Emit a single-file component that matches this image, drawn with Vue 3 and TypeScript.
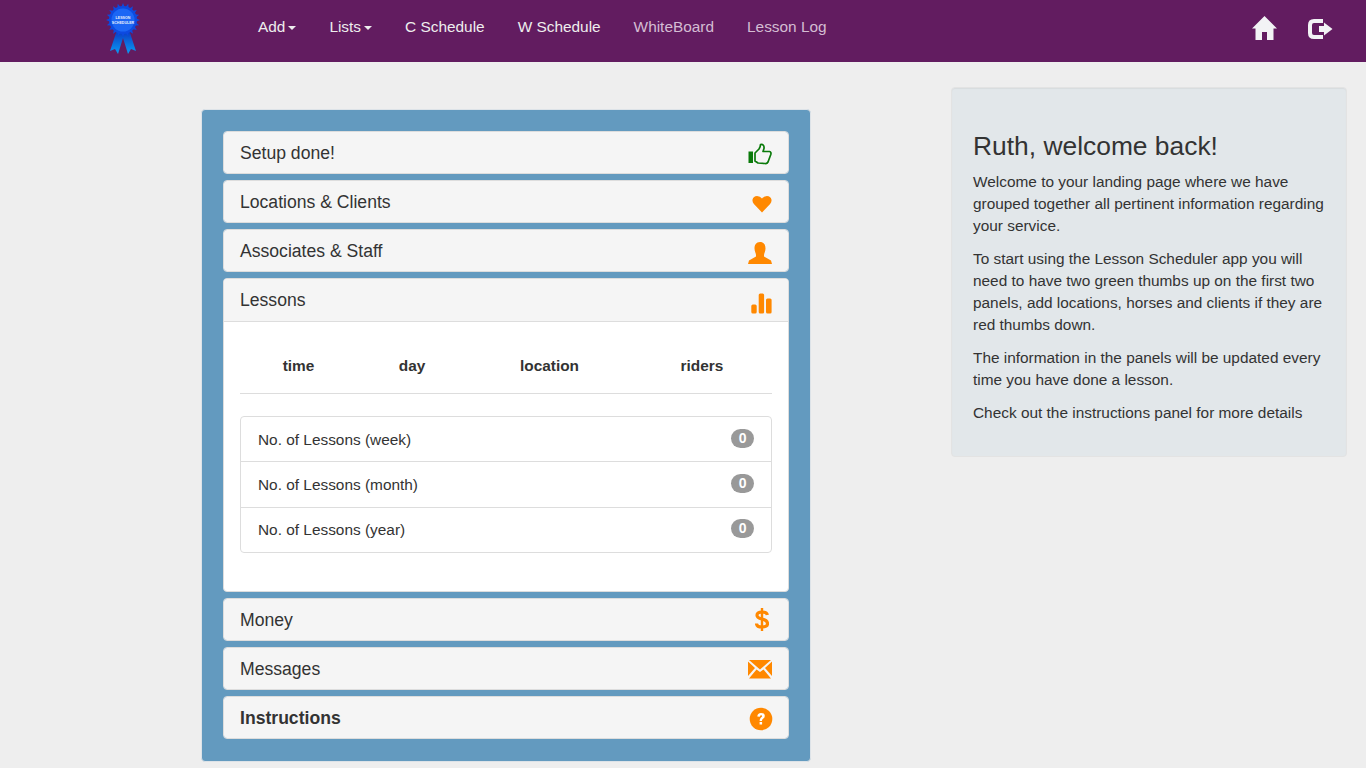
<script setup lang="ts">
interface Row { label: string }
const rows: Row[] = [
  { label: 'No. of Lessons (week)' },
  { label: 'No. of Lessons (month)' },
  { label: 'No. of Lessons (year)' },
]
const heads: string[] = ['time', 'day', 'location', 'riders']
const rays = Array.from({ length: 20 }, (_, i) => i * 18)
</script>

<template>
  <div class="page">
    <nav class="nav">
      <div class="logo">
        <svg width="36" height="56" viewBox="0 0 36 56">
          <defs>
            <linearGradient id="rib" x1="0" y1="0" x2="0" y2="1">
              <stop offset="0" stop-color="#0a35c0" />
              <stop offset="1" stop-color="#0a9cf5" />
            </linearGradient>
          </defs>
          <path d="M12 30 L5 51 L10 49 L13 54 L18 38 L23 54 L26 49 L31 51 L24 30 Z" fill="url(#rib)" />
          <g fill="#0d4ae0">
            <polygon v-for="r in rays" :key="r" points="18,3 20.500,9 15.500,9" :transform="`rotate(${r} 18 20)`" />
          </g>
          <circle cx="18" cy="20" r="14" fill="#0d4ae0" />
          <circle cx="18" cy="20" r="11.500" fill="#1b66f5" />
          <text x="18" y="18.500" text-anchor="middle" class="seal">LESSON</text>
          <text x="18" y="23.500" text-anchor="middle" class="seal">SCHEDULER</text>
        </svg>
      </div>
      <ul class="links">
        <li>Add<span class="caret"></span></li>
        <li>Lists<span class="caret"></span></li>
        <li>C Schedule</li>
        <li>W Schedule</li>
        <li class="dim">WhiteBoard</li>
        <li class="dim">Lesson Log</li>
      </ul>
      <div class="nav-icons">
        <svg class="home" width="25" height="24" viewBox="0 0 25 24">
          <path d="M12.500 0 L25 12.500 H21.500 V24 H15 V16 H10 V24 H3.500 V12.500 H0 Z" fill="#f2f3f5" />
        </svg>
        <svg width="25" height="20" viewBox="0 0 25 20">
          <path d="M15 2 H6 Q2 2 2 6 V14 Q2 18 6 18 H15" fill="none" stroke="#f2f3f5" stroke-width="4" />
          <path d="M11 7 H16 V3.500 L24.500 10 L16 16.500 V13 H11 Z" fill="#f2f3f5" />
        </svg>
      </div>
    </nav>

    <main class="main">
      <section class="board">
        <div class="panel">
          <div class="head"><span>Setup done!</span>
            <svg class="ico thumb" width="24" height="22" viewBox="0 0 24 22">
              <rect x="0.500" y="8.500" width="4.500" height="11.500" fill="#0a7a0a" />
              <path d="M7 10 L11 6 Q12.500 3.500 12.500 1.500 Q16.500 1 16 5.500 L15 8.500 H21.500 Q23.500 9 22.800 11.500 L20 19 Q19 21 17 20.500 L10 20 L7 18 Z" fill="none" stroke="#0a7a0a" stroke-width="1.700" stroke-linejoin="round" />
            </svg>
          </div>
        </div>
        <div class="panel">
          <div class="head"><span>Locations &amp; Clients</span>
            <svg class="ico down4" width="20" height="18" viewBox="0 0 22 20">
              <path d="M11 19.500 L2 10 Q0 8 0.500 5 Q1.500 1 5.500 1 Q9 1 11 4 Q13 1 16.500 1 Q20.500 1 21.500 5 Q22 8 20 10 Z" fill="#ff8800" />
            </svg>
          </div>
        </div>
        <div class="panel">
          <div class="head"><span>Associates &amp; Staff</span>
            <svg class="ico down4" width="24" height="22" viewBox="0 0 24 22">
              <path d="M12 0 C16 0 17.500 3 17.500 6.500 C17.500 9.500 16 11.500 16 13 V14.500 L23 18.500 L24 22 H0 L1 18.500 L8 14.500 V13 C8 11.500 6.500 9.500 6.500 6.500 C6.500 3 8 0 12 0 Z" fill="#ff8800" />
            </svg>
          </div>
        </div>
        <div class="panel open">
          <div class="head"><span>Lessons</span>
            <svg class="ico bars" width="22" height="22" viewBox="0 0 22 22">
              <rect x="1.300" y="12.500" width="5.400" height="9" rx="1.500" fill="#ff8800" />
              <rect x="8.700" y="1.500" width="5.400" height="20" rx="1.500" fill="#ff8800" />
              <rect x="16" y="6.500" width="5.600" height="15" rx="1.500" fill="#ff8800" />
            </svg>
          </div>
          <div class="body">
            <div class="cols">
              <strong v-for="h in heads" :key="h">{{ h }}</strong>
            </div>
            <ul class="list">
              <li v-for="r in rows" :key="r.label">
                <span>{{ r.label }}</span><b class="badge">0</b>
              </li>
            </ul>
          </div>
        </div>
        <div class="panel">
          <div class="head"><span>Money</span>
            <svg class="ico dollar" width="14" height="23" viewBox="0 0 14 23">
              <path d="M12.300 7 Q12 4 7 4 Q2 4 2 7.300 Q2 10 7 11 Q12.500 12 12.500 15.700 Q12.500 19 7 19 Q1.700 19 1.500 15.500" fill="none" stroke="#ff8800" stroke-width="3.200" />
              <rect x="5.800" y="0" width="2.400" height="23" fill="#ff8800" />
            </svg>
          </div>
        </div>
        <div class="panel">
          <div class="head"><span>Messages</span>
            <svg class="ico down3" width="24" height="19" viewBox="0 0 24 19">
              <path d="M1 0 H23 L12 9.500 Z M0 1.500 L7 8 L0 16 Z M24 1.500 V16 L17 8 Z M8.500 9.500 L12 12 L15.500 9.500 L23 18.500 H1 Z" fill="#ff8800" />
            </svg>
          </div>
        </div>
        <div class="panel">
          <div class="head strong"><span>Instructions</span>
            <svg class="ico down3 help" width="24" height="24" viewBox="0 0 24 24">
              <circle cx="12" cy="12" r="11.300" fill="#ff8800" />
              <path d="M8.300 9.500 Q8.500 6 12 6 Q15.800 6 15.800 9 Q15.800 11 13.800 12 Q13 12.500 13 14 H10.600 Q10.600 11.500 12 10.500 Q13.200 9.800 13.200 9 Q13.200 8.200 12 8.200 Q10.900 8.200 10.800 9.800 Z" fill="#fff" />
              <rect x="10.600" y="15" width="2.500" height="2.500" fill="#fff" />
            </svg>
          </div>
        </div>
      </section>

      <aside class="well">
        <h3>Ruth, welcome back!</h3>
        <p>Welcome to your landing page where we have grouped together all pertinent information regarding your service.</p>
        <p>To start using the Lesson Scheduler app you will need to have two green thumbs up on the first two panels, add locations, horses and clients if they are red thumbs down.</p>
        <p>The information in the panels will be updated every time you have done a lesson.</p>
        <p>Check out the instructions panel for more details</p>
      </aside>
    </main>
  </div>
</template>

<style>
html, body { margin: 0; background: #eee; }
</style>

<style scoped>
.page {
  font-family: "Liberation Sans", Arial, sans-serif;
  color: #333;
  font-size: 15.400px;
  height: 768px;
  overflow: hidden;
  background: #eee;
}
.nav {
  height: 62px;
  background: #621c60;
  display: flex;
  align-items: center;
}
.logo { margin-left: 105px; width: 36px; height: 56px; align-self: flex-start; }
.seal { font-size: 3.600px; fill: #e8eefc; font-family: "Liberation Sans", Arial, sans-serif; font-weight: 700; }
.links {
  list-style: none;
  margin: 0 0 8px 117px;
  padding: 0;
  display: flex;
  gap: 33px;
  color: #eee;
  font-size: 15.400px;
  line-height: 20px;
}
.links .dim { color: #d4bcd3; }
.caret {
  display: inline-block;
  margin-left: 3px;
  vertical-align: middle;
  border-top: 4px solid #eee;
  border-left: 4.500px solid transparent;
  border-right: 4.500px solid transparent;
}
.nav-icons {
  margin: 0 33px 4px auto;
  display: flex;
  align-items: center;
  gap: 31px;
}
.home { margin-bottom: 2px; }
.main { display: flex; align-items: flex-start; }
.board {
  margin: 47px 0 0 201px;
  width: 610px;
  height: 653px;
  box-sizing: border-box;
  padding: 21px 21px 0;
  background: #639abf;
  border: 1px solid #dde3e8;
  border-radius: 4px;
  display: flex;
  flex-direction: column;
  gap: 5.600px;
}
.panel {
  background: #fff;
  border: 1px solid #ddd;
  border-radius: 4px;
  overflow: hidden;
}
.head {
  height: 41.400px;
  box-sizing: border-box;
  background: #f5f5f5;
  display: flex;
  align-items: center;
  justify-content: space-between;
  padding: 0 16px;
  font-size: 17.600px;
  color: #333;
}
.head span { margin-top: 2px; }
.head.strong { font-weight: 700; }
.open .head { border-bottom: 1px solid #ddd; height: 43px; }
.ico { display: block; }
.thumb { margin-top: 2px; }
.down4 { margin-top: 4px; }
.down3 { margin-top: 3px; }
.bars { margin-top: 6px; }
.dollar { margin-right: 3px; margin-top: 1px; }
.help { margin-right: -1px; }
.body { height: 269px; box-sizing: border-box; padding: 0 16px; }
.cols {
  display: grid;
  grid-template-columns: 117px 110px 165px 140px;
  align-items: center;
  border-bottom: 1px solid #ddd;
  padding-top: 18px;
  height: 53px;
  font-size: 15.400px;
  text-align: center;
}
.cols strong { font-weight: 700; }
.list {
  list-style: none;
  margin: 22px 0 0;
  padding: 0;
  border: 1px solid #ddd;
  border-radius: 4px;
}
.list li {
  height: 44.400px;
  box-sizing: border-box;
  display: flex;
  align-items: center;
  justify-content: space-between;
  padding: 0 17px;
  font-size: 15.400px;
}
.list li:first-child { padding-top: 2px; }
.list li + li { border-top: 1px solid #ddd; height: 45.400px; }
.badge {
  background: #999;
  color: #fff;
  font-size: 14px;
  font-weight: 700;
  border-radius: 10px;
  padding: 3px 7.500px;
  line-height: 13px;
  margin-bottom: 2px;
}
.list li:first-child .badge { margin-bottom: 4px; }
.well {
  margin: 25px 0 0 140px;
  width: 396px;
  height: 370px;
  box-sizing: border-box;
  padding: 42px 20px 0 21px;
  background: #e2e7ea;
  border: 1px solid #e3e3e3;
  border-radius: 4px;
  box-shadow: inset 0 1px 1px rgba(0,0,0,.05);
}
.well h3 {
  margin: 0 0 9px;
  font-size: 26.400px;
  font-weight: 400;
  line-height: 32px;
}
.well p {
  margin: 0 0 11px;
  font-size: 15.400px;
  line-height: 22px;
}
</style>
